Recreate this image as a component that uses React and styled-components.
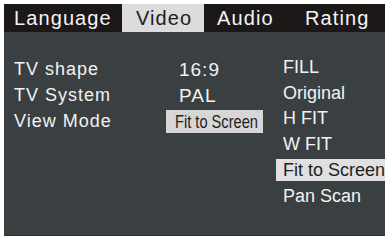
import React from "react";
import styled, { createGlobalStyle } from "styled-components";

const GlobalStyle = createGlobalStyle`
  html, body {
    margin: 0;
    padding: 0;
    background: #ffffff;
  }
  body {
    font-family: "Liberation Sans", Arial, sans-serif;
  }
`;

const tabs = [
  { label: "Language", w: 118, pad: 10 },
  { label: "Video", w: 82, pad: 14, active: true },
  { label: "Audio", w: 87, pad: 13 },
  { label: "Rating", w: 94, pad: 14 },
];

const labels = ["TV shape", "TV System", "View Mode"];

const values = [
  { text: "16:9" },
  { text: "PAL" },
  { text: "Fit to Screen", active: true },
];

const options = [
  "FILL",
  "Original",
  "H FIT",
  "W FIT",
  "Fit to Screen",
  "Pan Scan",
];

const App = () => {
  return (
    <>
      <GlobalStyle />
      <Frame>
        <Panel>
          <TabBar>
            {tabs.map((tab) => (
              <Tab key={tab.label} $w={tab.w} $pad={tab.pad} $active={tab.active}>
                {tab.label}
              </Tab>
            ))}
          </TabBar>
          <Body>
            <LabelCol>
              {labels.map((label) => (
                <Row key={label}>
                  <LabelText>{label}</LabelText>
                </Row>
              ))}
            </LabelCol>
            <ValueCol>
              {values.map((value) => (
                <Row key={value.text}>
                  {value.active ? (
                    <ValueChip>
                      <Narrow>{value.text}</Narrow>
                    </ValueChip>
                  ) : (
                    <ValueText>{value.text}</ValueText>
                  )}
                </Row>
              ))}
            </ValueCol>
            <OptionCol>
              {options.map((option) => (
                <Row key={option}>
                  <Option $active={option === "Fit to Screen"}>{option}</Option>
                </Row>
              ))}
            </OptionCol>
          </Body>
        </Panel>
      </Frame>
    </>
  );
};

const Frame = styled.div`
  width: 387px;
  height: 240px;
  padding: 4px 2px 4px 4px;
  box-sizing: border-box;
  background: #ffffff;
`;

const Panel = styled.div`
  display: flex;
  flex-direction: column;
  width: 100%;
  height: 100%;
  background: #3a4041;
  border-bottom: 1px solid #2c3132;
  box-sizing: border-box;
`;

const TabBar = styled.div`
  display: flex;
  height: 28px;
  background: #1c1818;
`;

const Tab = styled.div`
  width: ${(p) => p.$w}px;
  padding-left: ${(p) => p.$pad}px;
  box-sizing: border-box;
  line-height: 28px;
  font-size: 20px;
  letter-spacing: 1.1px;
  color: ${(p) => (p.$active ? "#1e1e1e" : "#f4f4f4")};
  background: ${(p) => (p.$active ? "#dcdcdc" : "transparent")};
`;

const Body = styled.div`
  display: flex;
  padding-top: 25px;
`;

const LabelCol = styled.div`
  width: 162px;
  padding-left: 10px;
  box-sizing: border-box;
`;

const ValueCol = styled.div`
  width: 110px;
`;

const OptionCol = styled.div`
  flex: 1;
  margin-top: -3px;
`;

const Row = styled.div`
  display: flex;
  align-items: center;
  height: 25.8px;
`;

const LabelText = styled.span`
  font-size: 18px;
  letter-spacing: 1px;
  color: #f2f2f2;
`;

const ValueText = styled.span`
  padding-left: 13px;
  font-size: 19px;
  letter-spacing: 1px;
  color: #f2f2f2;
`;

const ValueChip = styled.span`
  display: block;
  width: 97px;
  height: 23px;
  padding-left: 9px;
  box-sizing: border-box;
  background: #d6d6d6;
  overflow: hidden;
`;

const Narrow = styled.span`
  display: inline-block;
  font-size: 19px;
  line-height: 23px;
  color: #1e1e1e;
  white-space: nowrap;
  transform: scaleX(0.77);
  transform-origin: left center;
`;

const Option = styled.span`
  display: block;
  width: 100%;
  height: 22px;
  line-height: 22px;
  padding-left: 7px;
  box-sizing: border-box;
  font-size: 18px;
  color: ${(p) => (p.$active ? "#1e1e1e" : "#f2f2f2")};
  background: ${(p) => (p.$active ? "#e0e0e0" : "transparent")};
  white-space: nowrap;
`;

export default App;
